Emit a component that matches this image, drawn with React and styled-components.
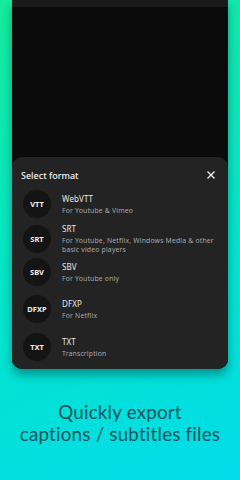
import React from 'react';
import styled, { createGlobalStyle } from 'styled-components';

const Global = createGlobalStyle`
    html, body {
        margin: 0;
        padding: 0;
    }
    body {
        width: 240px;
        height: 480px;
        overflow: hidden;
        background: linear-gradient(160deg, #17eb9c 0%, #06e6c4 45%, #00dcea 100%);
        font-family: "Noto Sans", "Liberation Sans", sans-serif;
    }
`;

const formats = [
    { code: 'VTT', name: 'WebVTT', desc: 'For Youtube & Vimeo', gap: 6 },
    { code: 'SRT', name: 'SRT', desc: 'For Youtube, Netflix, Windows Media & other basic video players', gap: 4 },
    { code: 'SBV', name: 'SBV', desc: 'For Youtube only', gap: 9 },
    { code: 'DFXP', name: 'DFXP', desc: 'For Netflix', gap: 10 },
    { code: 'TXT', name: 'TXT', desc: 'Transcription', gap: 0 },
];

function App() {
    return (
        <Page>
            <Global />
            <Phone>
                <StatusStrip />
                <Screen />
                <Sheet>
                    <SheetHeader>
                        <SheetTitle>Select format</SheetTitle>
                        <Close viewBox="0 0 10 10">
                            <path d="M1.5 1.5 L8.5 8.5 M8.5 1.5 L1.5 8.5" />
                        </Close>
                    </SheetHeader>
                    <List>
                        {formats.map((f) => (
                            <Row key={f.code} $gap={f.gap}>
                                <Badge>{f.code}</Badge>
                                <Info>
                                    <Name>{f.name}</Name>
                                    <Desc>{f.desc}</Desc>
                                </Info>
                            </Row>
                        ))}
                    </List>
                </Sheet>
            </Phone>
            <Caption>
                Quickly export<br />
                captions / subtitles files
            </Caption>
        </Page>
    );
}

const Page = styled.div`
    display: flex;
    flex-direction: column;
    align-items: center;
    height: 480px;
`;

const Phone = styled.div`
    width: 216px;
    background: #0b0b0b;
    display: flex;
    flex-direction: column;
    border-radius: 0 0 10px 10px;
    box-shadow: 0 6px 10px rgba(0, 60, 60, 0.45);
`;

const StatusStrip = styled.div`
    height: 7px;
    background: #1b1b1b;
`;

const Screen = styled.div`
    height: 150px;
    background: #0b0b0b;
`;

const Sheet = styled.div`
    background: #232323;
    border-radius: 10px;
    padding: 10px 0 12px 0;
    height: 212px;
    box-sizing: border-box;
`;

const SheetHeader = styled.div`
    display: flex;
    align-items: center;
    justify-content: space-between;
    padding: 1px 12px 0 9px;
    height: 14px;
`;

const SheetTitle = styled.div`
    color: #f2f2f2;
    font-size: 9px;
    font-weight: 500;
`;

const Close = styled.svg`
    width: 10px;
    height: 10px;
    stroke: #f0f0f0;
    stroke-width: 1.4;
    fill: none;
`;

const List = styled.div`
    display: flex;
    flex-direction: column;
    padding: 8px 0 0 11px;
`;

const Row = styled.div`
    display: flex;
    align-items: center;
    gap: 11px;
    margin-bottom: ${(p) => p.$gap}px;
`;

const Badge = styled.div`
    width: 28px;
    height: 28px;
    flex: none;
    border-radius: 50%;
    background: #141414;
    color: #f0f0f0;
    font-size: 7.5px;
    font-weight: 700;
    display: flex;
    align-items: center;
    justify-content: center;
`;

const Info = styled.div`
    display: flex;
    flex-direction: column;
    gap: 2px;
    padding-right: 14px;
`;

const Name = styled.div`
    color: #e6e6e6;
    font-size: 8px;
    line-height: 10px;
    letter-spacing: 0.1px;
`;

const Desc = styled.div`
    color: #a8a8a8;
    font-size: 6.8px;
    line-height: 9px;
    letter-spacing: 0.2px;
`;

const Caption = styled.div`
    margin-top: 32px;
    text-align: center;
    color: #17535a;
    font-family: "Lato", "Noto Sans", sans-serif;
    font-weight: 400;
    font-size: 18.8px;
    line-height: 22px;
    letter-spacing: 0.2px;
`;

export default App;
